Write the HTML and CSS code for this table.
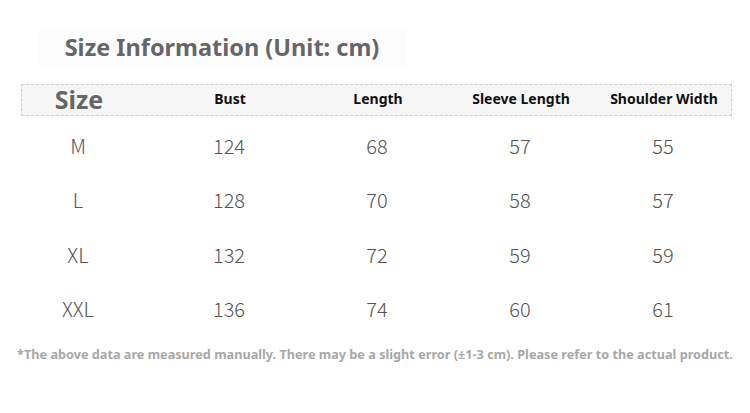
FILE: index.html
```html
<!DOCTYPE html>
<html>
<head>
<meta charset="utf-8">
<link rel="stylesheet" href="styles.css">
</head>
<body>
<div class="page">
  <div class="title-wrap"><h1 class="title">Size Information (Unit: cm)</h1></div>
  <div class="table">
    <div class="row head">
      <div class="cell size-h">Size</div>
      <div class="cell">Bust</div>
      <div class="cell">Length</div>
      <div class="cell">Sleeve Length</div>
      <div class="cell">Shoulder Width</div>
    </div>
    <div class="row data"><div class="cell">M</div><div class="cell">124</div><div class="cell">68</div><div class="cell">57</div><div class="cell">55</div></div>
    <div class="row data"><div class="cell">L</div><div class="cell">128</div><div class="cell">70</div><div class="cell">58</div><div class="cell">57</div></div>
    <div class="row data"><div class="cell">XL</div><div class="cell">132</div><div class="cell">72</div><div class="cell">59</div><div class="cell">59</div></div>
    <div class="row data"><div class="cell">XXL</div><div class="cell">136</div><div class="cell">74</div><div class="cell">60</div><div class="cell">61</div></div>
  </div>
  <p class="note">*The above data are measured manually. There may be a slight error (±1-3 cm). Please refer to the actual product.</p>
</div>
</body>
</html>
```

FILE: styles.css
```css
* { box-sizing: border-box; }
html, body { margin: 0; padding: 0; background: #fff; }
body { width: 750px; height: 413px; overflow: hidden; font-family: "Noto Sans", "Noto Sans CJK SC", sans-serif; }
.page { padding-top: 28px; }
.title-wrap {
  margin-left: 38px;
  width: 368px;
  height: 40px;
  background: #fdfdfd;
  display: flex;
  align-items: center;
  justify-content: center;
}
.title {
  margin: 0;
  font-size: 23.5px;
  font-weight: 700;
  color: #666;
  line-height: 1;
}
.table { margin-top: 16px; margin-left: 21px; width: 711px; }
.row {
  display: grid;
  grid-template-columns: 114px 188px 108px 178px 108px;
  align-items: center;
}
.cell { text-align: center; white-space: nowrap; }
.head {
  height: 32px;
  border: 1px dashed #cfcfcf;
  background: #f6f6f6;
  font-size: 14px;
  font-weight: 700;
  color: #111;
  line-height: 1;
  padding-bottom: 3px;
}
.head .size-h { font-size: 25px; color: #666; padding-top: 2px; }
.data {
  height: 54.5px;
  font-family: "Noto Sans CJK SC", "Noto Sans", sans-serif;
  font-weight: 300;
  font-size: 20px;
  color: #555;
}
.table .head + .data { margin-top: 2px; }
.note {
  margin: 10px 0 0 0;
  text-align: center;
  font-size: 12.7px;
  font-weight: 700;
  color: #a8a8a8;
  line-height: 16px;
}
```
